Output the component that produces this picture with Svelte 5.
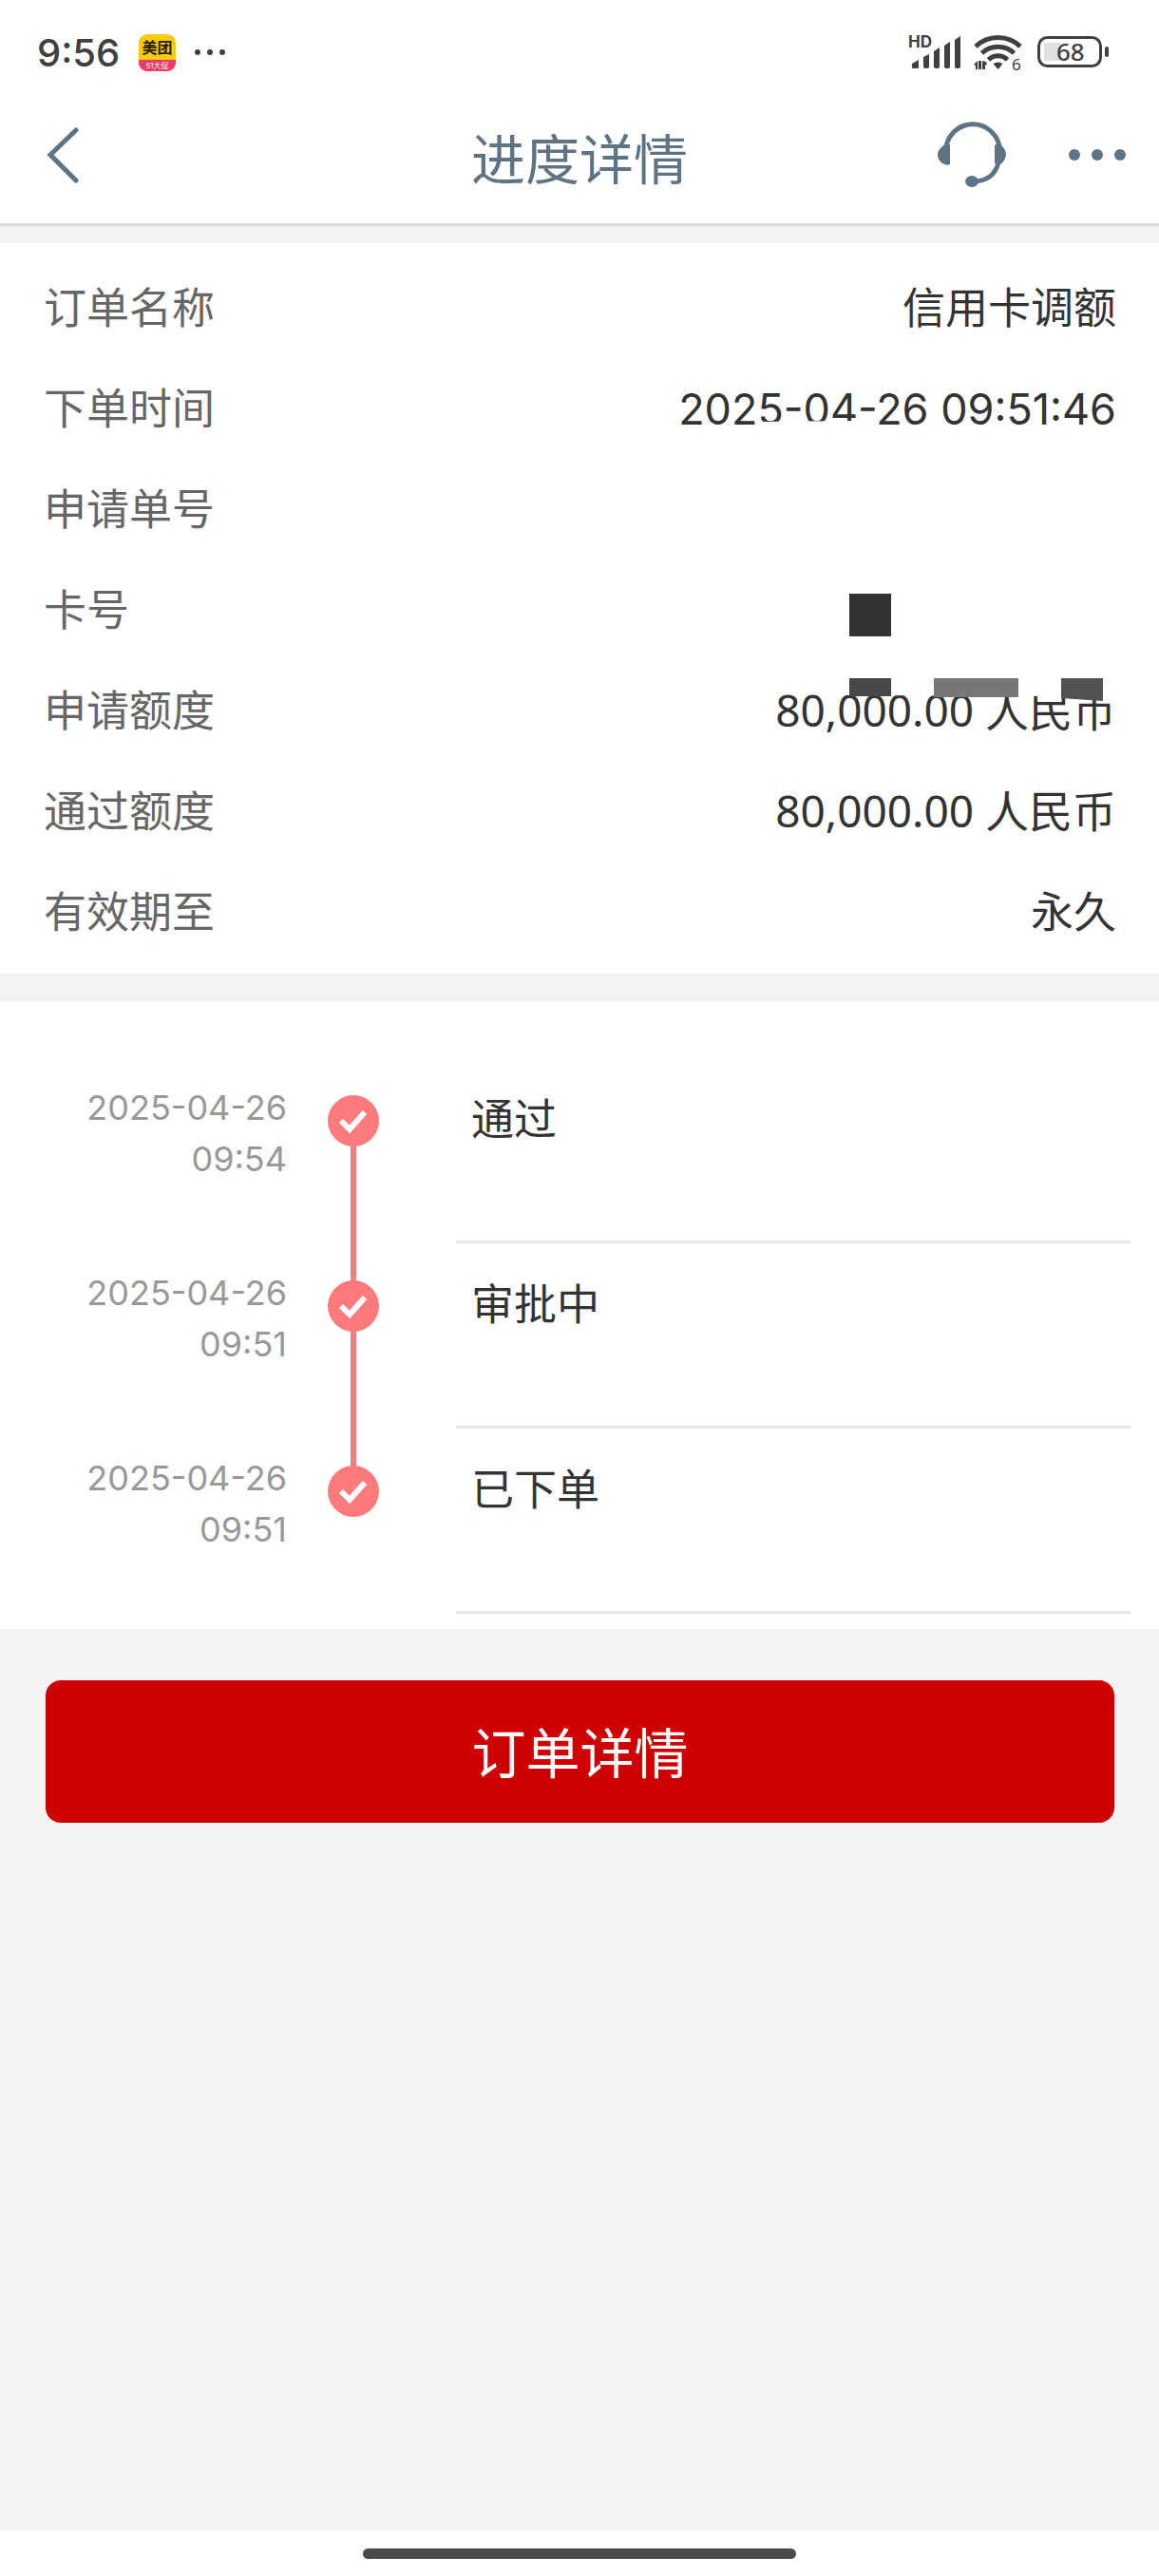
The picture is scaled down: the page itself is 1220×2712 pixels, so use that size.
<script lang="ts">
  type Row = { label: string; value: string; kind?: 'date' | 'amount' };
  const rows: Row[] = [
    { label: '订单名称', value: '信用卡调额' },
    { label: '下单时间', value: '2025-04-26 09:51:46', kind: 'date' },
    { label: '申请单号', value: '' },
    { label: '卡号', value: '' },
    { label: '申请额度', value: '80,000.00 人民币', kind: 'amount' },
    { label: '通过额度', value: '80,000.00 人民币', kind: 'amount' },
    { label: '有效期至', value: '永久' },
  ];
  const steps = [
    { date: '2025-04-26', time: '09:54', title: '通过' },
    { date: '2025-04-26', time: '09:51', title: '审批中' },
    { date: '2025-04-26', time: '09:51', title: '已下单' },
  ];
</script>

<div class="screen">
  <div class="status">
    <span class="clock">9:56</span>
    <span class="app">
      <span class="app-name">美团</span>
      <span class="app-tag">51大促</span>
    </span>
    <svg class="more" width="34" height="8" viewBox="0 0 34 8" aria-hidden="true">
      <circle cx="4" cy="4" r="3" /><circle cx="17" cy="4" r="3" /><circle cx="30" cy="4" r="3" />
    </svg>
    <svg class="signals" width="212" height="44" viewBox="0 0 212 44" aria-hidden="true">
      <text class="hd" x="0" y="17">HD</text>
      <g>
        <path d="M4 36v-2l7-4v8a1 1 0 0 1-1 1H6a2 2 0 0 1-2-3z" />
        <path d="M16 27l6-3v13a2 2 0 0 1-2 2h-2a2 2 0 0 1-2-2z" />
        <path d="M27 21l6-4v20a2 2 0 0 1-2 2h-2a2 2 0 0 1-2-2z" />
        <path d="M38 15l6-4v26a2 2 0 0 1-2 2h-2a2 2 0 0 1-2-2z" />
        <path d="M49 9l6-4v32a2 2 0 0 1-2 2h-2a2 2 0 0 1-2-2z" />
      </g>
      <g class="waves">
        <path d="M71 16a34 34 0 0 1 47 0" />
        <path d="M77.500 23a25 25 0 0 1 34 0" />
        <path d="M84.500 30a14 14 0 0 1 20 0" />
      </g>
      <path d="M89.500 34q5-3 10 0l-4 5q-1 1-2 0z" />
      <path d="M69 35l4-4v9h-2v-4zM74 31h3v9h-3zM78 31l4 1 1 4-2-1v5h-3z" />
      <text class="gen" x="109" y="41">6</text>
      <rect class="cell" x="137.500" y="6.500" width="65" height="30" rx="9" />
      <path class="charge" d="M143 12h17v19h-17z" />
      <text class="level" x="156" y="31">68</text>
      <rect x="207" y="16" width="4" height="11" rx="2" />
    </svg>
  </div>

  <header class="bar">
    <button class="icon back" aria-label="返回">
      <svg width="40" height="60" viewBox="0 0 40 60"><path d="M35 4L8 30L35 57" /></svg>
    </button>
    <h1>进度详情</h1>
    <div class="tools">
      <button class="icon" aria-label="客服">
        <svg width="74" height="72" viewBox="0 0 74 72">
          <path class="ring" d="M9 27a28.500 28.500 0 0 1 56 0M64 44q-5 20-27 20" />
          <path d="M13 25v21q-3 2-8-1q-5-4-5-9t5-9q3-3 8-2zM60 26q4-3 8 1q4 4 4 8.500t-4 9q-4 3-8 0z" />
          <ellipse cx="36" cy="64" rx="7" ry="6" />
        </svg>
      </button>
      <button class="icon" aria-label="更多">
        <svg width="60" height="12" viewBox="0 0 60 12">
          <circle cx="6" cy="6" r="6" /><circle cx="30" cy="6" r="6" /><circle cx="54" cy="6" r="6" />
        </svg>
      </button>
    </div>
  </header>

  <section class="details">
    <dl>
      {#each rows as row}
        <div class="row">
          <dt>{row.label}</dt>
          <dd class={row.kind ?? 'plain'}>{row.value}</dd>
        </div>
      {/each}
    </dl>
    <svg class="mask" width="400" height="320" viewBox="780 430 400 320" aria-hidden="true">
      <path class="paper" d="M797 444l101-1v10H797zM868 714h307v24l-58-4-7-1-207-1h-35z" />
      <path class="m1" d="M894 625h44v45h-44z" />
      <path class="m2" d="M894 714h44v19h-44z" />
      <path class="m3" d="M983 714h89v20h-89z" />
      <path class="m4" d="M1117 714h44v24l-44-3z" />
    </svg>
  </section>

  <ol class="timeline">
    {#each steps as step}
      <li>
        <time>{step.date}<br />{step.time}</time>
        <div class="track">
          <svg width="54" height="54" viewBox="0 0 54 54" aria-hidden="true">
            <circle cx="27" cy="27" r="27" />
            <path d="M14 27l9 9L39 18" />
          </svg>
        </div>
        <p>{step.title}</p>
      </li>
    {/each}
  </ol>

  <button class="submit">订单详情</button>

  <footer><span></span></footer>
</div>

<style>
  :global(body) {
    background: #f3f3f3;
  }
  .screen {
    display: flex;
    flex-direction: column;
    min-height: 100vh;
    font-family: Inter, 'Noto Sans CJK SC', sans-serif;
    color: #333;
  }
  h1, dl, dd, ol, p {
    margin: 0;
    padding: 0;
  }
  button {
    font-family: inherit;
    border: 0;
    cursor: pointer;
  }
  .status {
    display: flex;
    align-items: center;
    height: 110px;
    padding: 0 52px 0 39px;
    background: #fff;
    fill: #404040;
  }
  .clock {
    width: 107px;
    font-size: 40px;
    font-weight: 500;
    color: #404040;
  }
  .app {
    display: flex;
    flex-direction: column;
    width: 39px;
    height: 39px;
    border-radius: 9px;
    overflow: hidden;
    background: #fbcb10;
    text-align: center;
    white-space: nowrap;
  }
  .app-name {
    height: 27px;
    font-size: 16px;
    line-height: 28px;
    font-weight: 700;
    color: #2a2000;
  }
  .app-tag {
    height: 12px;
    font-size: 8px;
    line-height: 12px;
    color: #fff;
    background: #ee3a66;
  }
  .more {
    margin-left: 19px;
  }
  .signals {
    margin-left: auto;
    overflow: visible;
  }
  .hd {
    font: 700 17px Inter, sans-serif;
  }
  .gen {
    font: 400 17px 'Noto Sans', sans-serif;
  }
  .level {
    font: 500 26px 'Noto Sans', sans-serif;
  }
  .waves, .cell {
    fill: none;
    stroke: #404040;
  }
  .waves {
    stroke-width: 5;
  }
  .cell {
    stroke-width: 3;
  }
  .charge {
    fill: #e0e0e0;
  }
  .bar {
    display: grid;
    grid-template-columns: 1fr auto 1fr;
    align-items: center;
    height: 125px;
    padding: 0 35px;
    background: #fff;
    border-bottom: 3px solid #dcdcdc;
    fill: #5e7484;
  }
  .icon {
    display: flex;
    padding: 0;
    background: none;
  }
  .icon svg {
    fill: inherit;
  }
  .back {
    width: 50px;
    margin-bottom: 20px;
    padding-left: 10px;
  }
  .back path, .ring {
    fill: none;
    stroke: #5e7484;
    stroke-width: 5;
    stroke-linecap: round;
  }
  h1 {
    margin-bottom: 8px;
    font-size: 57px;
    font-weight: 400;
    line-height: 84px;
    color: #5e7484;
  }
  .tools {
    display: flex;
    align-items: center;
    justify-content: flex-end;
    gap: 64px;
    margin-bottom: 20px;
  }
  .details {
    position: relative;
    margin-top: 18px;
    padding: 16px 45px 11px 46px;
    background: #fff;
  }
  .row {
    display: flex;
    align-items: baseline;
    justify-content: space-between;
    height: 86px;
    padding-top: 20px;
    font-size: 45px;
    line-height: 66px;
  }
  dt {
    color: #666;
  }
  .amount {
    font-family: 'Noto Sans', 'Noto Sans CJK SC', sans-serif;
    font-size: 46px;
    line-height: 56px;
  }
  .mask {
    position: absolute;
    top: 174px;
    right: 40px;
  }
  .paper {
    fill: #fff;
  }
  .m1 {
    fill: #333;
  }
  .m2 {
    fill: #484848;
  }
  .m3 {
    fill: #777;
  }
  .m4 {
    fill: #525252;
  }
  .timeline {
    margin-top: 29px;
    padding: 60px 30px 16px 0;
    background: #fff;
    list-style: none;
  }
  li {
    display: grid;
    grid-template-columns: 302px 140px 38px 1fr;
    height: 195px;
  }
  time {
    padding-top: 25px;
    font-size: 36px;
    line-height: 54px;
    text-align: right;
    color: #999;
  }
  .track {
    display: flex;
    justify-content: center;
    padding-top: 39px;
    background: linear-gradient(#ef8080, #ef8080) center / 6px 100% no-repeat;
  }
  li:first-child .track {
    background-position: center 66px;
  }
  li:last-child .track {
    background-size: 6px 66px;
    background-position: center top;
  }
  .track circle {
    fill: #ff7b7b;
  }
  .track path {
    fill: none;
    stroke: #fff;
    stroke-width: 6;
  }
  li p {
    grid-column: 4;
    padding: 32px 0 0 16px;
    font-size: 45px;
    line-height: 66px;
    border-bottom: 3px solid #e8e8e8;
  }
  .submit {
    height: 150px;
    margin: 54px 47px 0 48px;
    padding: 0 0 4px;
    border-radius: 16px;
    background: #cf0000;
    color: #fff;
    font-size: 57px;
  }
  footer {
    display: flex;
    justify-content: center;
    height: 48px;
    margin-top: auto;
    background: #fff;
  }
  footer span {
    width: 456px;
    height: 11px;
    margin-top: 19px;
    border-radius: 6px;
    background: #4a4a4a;
  }
</style>
